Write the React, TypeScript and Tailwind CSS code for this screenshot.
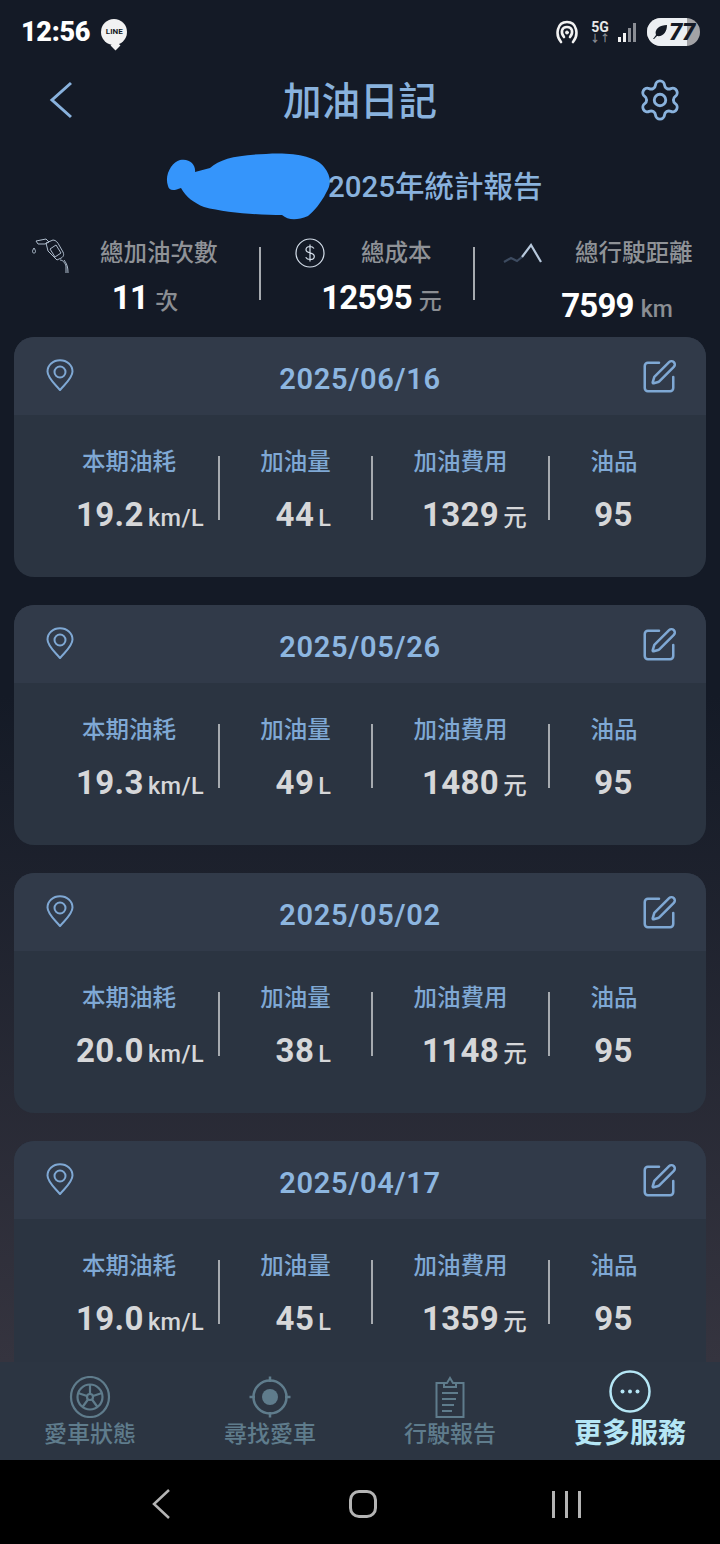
import React from 'react';
import { Settings, SquarePen } from 'lucide-react';

const fontStack = { fontFamily: 'Roboto, "Noto Sans CJK TC", sans-serif' };

const records = [
  { date: '2025/06/16', economy: '19.2', liters: '44', cost: '1329', grade: '95' },
  { date: '2025/05/26', economy: '19.3', liters: '49', cost: '1480', grade: '95' },
  { date: '2025/05/02', economy: '20.0', liters: '38', cost: '1148', grade: '95' },
  { date: '2025/04/17', economy: '19.0', liters: '45', cost: '1359', grade: '95' },
];

function PinIcon() {
  return (
    <svg width="28" height="32" viewBox="0 0 28 32" fill="none" stroke="#7fa8d4" strokeWidth="2">
      <path d="M14 31 C9 25 1.500 19 1.500 12.500 C1.500 6 7 1.200 14 1.200 C21 1.200 26.500 6 26.500 12.500 C26.500 19 19 25 14 31Z" />
      <circle cx="14" cy="13" r="5.500" />
    </svg>
  );
}

function FuelIcon() {
  return (
    <svg width="38" height="36" viewBox="0 0 38 36" fill="none" stroke="#aebccc" strokeWidth="1" strokeLinejoin="round">
      <path d="M5 3 L15 1 L18 4 L14 6 L7 6Z" />
      <path d="M3 10 C1 13 1 15 3 15 C5 15 5 13 3 10Z" />
      <path d="M15 5 L22 2 C25 2 27 5 28 7 L32 14 C34 18 31 20 28 21 L26 22 L17 13Z" />
      <path d="M19 11 L25 7 L30 15 L24 19Z" />
      <path d="M29 22 C32 22 34 25 35 28 L35 35 M33 22 C36 26 37 29 37 35" />
    </svg>
  );
}

function DollarIcon() {
  return (
    <svg width="30" height="30" viewBox="0 0 30 30" fill="none" stroke="#d5dfeb" strokeWidth="1.200">
      <circle cx="15" cy="15" r="14" />
      <path d="M19 10.500 C18 9 16.500 8.500 15 8.500 C12.500 8.500 11 9.800 11 11.700 C11 16 19.300 13.700 19.300 18.400 C19.300 20.300 17.500 21.500 15 21.500 C13 21.500 11.500 20.700 10.700 19.300 M15 6.500 L15 23.500" />
    </svg>
  );
}

function RouteIcon() {
  return (
    <svg width="40" height="24" viewBox="0 0 40 24" fill="none" strokeWidth="2.200">
      <path d="M1 20 L8 16 L14 19 L19 15" stroke="#3d4b60" />
      <path d="M19 15 L28 3 L38 20" stroke="#b7c8dc" />
    </svg>
  );
}

function WheelIcon() {
  return (
    <svg width="42" height="42" viewBox="0 0 42 42" fill="none" stroke="#5f7c8c" strokeWidth="2.200">
      <ellipse cx="21" cy="21" rx="19" ry="20" />
      <circle cx="21" cy="21" r="12.500" />
      <circle cx="21" cy="21" r="3" />
      <path d="M21 8.500 L21 18 M9 17 L18 20 M13.500 31 L19 23.500 M28.500 31 L23 23.500 M33 17 L24 20" />
    </svg>
  );
}

function TargetIcon() {
  return (
    <svg width="42" height="42" viewBox="0 0 42 42" fill="none" stroke="#5f7c8c" strokeWidth="2.500">
      <circle cx="21" cy="21" r="16.500" />
      <circle cx="21" cy="21" r="8" fill="#5f7c8c" stroke="none" />
      <path d="M21 0.500 L21 6 M21 36 L21 41.500 M0.500 21 L6 21 M36 21 L41.500 21" />
    </svg>
  );
}

function ReportIcon() {
  return (
    <svg width="30" height="42" viewBox="0 0 30 42" fill="none" stroke="#5f7c8c" strokeWidth="2">
      <path d="M9 7 L1.500 7 L1.500 41 L28.500 41 L28.500 7 L21 7" />
      <path d="M9 11 L9 7 L12 7 L15 2 L18 7 L21 7 L21 11Z" />
      <path d="M7 17 L23 17 M7 23 L21 23 M7 29 L19 29 M7 35 L17 35" />
    </svg>
  );
}

function MoreIcon() {
  return (
    <svg width="42" height="43" viewBox="0 0 42 43" fill="none">
      <ellipse cx="21" cy="21.500" rx="19.500" ry="20" stroke="#b5e6f5" strokeWidth="2.500" />
      <circle cx="13.500" cy="21.500" r="2" fill="#b5e6f5" />
      <circle cx="21" cy="21.500" r="2" fill="#b5e6f5" />
      <circle cx="28.500" cy="21.500" r="2" fill="#b5e6f5" />
    </svg>
  );
}

function StatusBar() {
  return (
    <div className="h-[64px] shrink-0 flex items-start justify-between pl-[21px] pr-[20px] pt-[18px]">
      <div className="flex items-center gap-[11px]">
        <span className="text-[27px] leading-[28px] font-black text-white tracking-[-0.3px]">12:56</span>
        <div className="relative w-[26px] h-[26px] rounded-full bg-[#f2f2f2] flex items-center justify-center">
          <span className="text-[8px] leading-none font-bold text-[#141a26]">LINE</span>
          <span className="absolute -bottom-[4px] left-[11px] w-[7px] h-[7px] bg-[#f2f2f2] rotate-45" />
        </div>
      </div>
      <div className="flex items-center h-[28px]">
        <svg width="22" height="24" viewBox="0 0 22 24" fill="none" stroke="#f2f2f2" strokeWidth="2.600" strokeLinecap="round">
          <path d="M5 22 C-1 15 1 2 11 2 C21 2 23 15 17 22" />
          <path d="M8 17 C4 12 6 7 11 7 C16 7 18 12 14 17" />
          <circle cx="11" cy="12.500" r="1.500" fill="#f2f2f2" strokeWidth="1" />
        </svg>
        <div className="ml-[13px] w-[18px] flex flex-col items-center">
          <span className="text-[14px] leading-[14px] font-bold text-[#e8e8e8]">5G</span>
          <span className="text-[10px] leading-[10px] font-bold text-[#8a8d94]">↓↑</span>
        </div>
        <svg className="ml-[9px]" width="20" height="20" viewBox="0 0 20 20">
          <rect x="0" y="15" width="3" height="5" fill="#f2f2f2" />
          <rect x="5" y="11" width="3" height="9" fill="#f2f2f2" />
          <rect x="10" y="6" width="3" height="14" fill="#8a8d94" />
          <rect x="15" y="1" width="3" height="19" fill="#8a8d94" />
        </svg>
        <div className="ml-[9px] w-[53px] h-[28px] rounded-full bg-[#a3a3a6] overflow-hidden">
          <div className="w-[40px] h-full bg-[#eceff3] flex items-center pl-[5px]">
            <svg width="16" height="16" viewBox="0 0 16 16" className="shrink-0">
              <path d="M1 15 L4 11 C2 5 8 1 15 1 C15 8 11 13 5 12 L2 15Z" fill="#141a26" />
            </svg>
            <span className="ml-[1px] text-[24px] leading-none font-black italic text-[#141a26] whitespace-nowrap tracking-[-0.5px]">77</span>
          </div>
        </div>
      </div>
    </div>
  );
}

function Stat({ value, unit }: { value: string; unit: string }) {
  return (
    <div className="flex items-baseline justify-center whitespace-nowrap">
      <span className="text-[33px] leading-[40px] font-bold text-white tracking-[-0.8px]">{value}</span>
      <span className="ml-[7px] text-[23px] leading-[40px] font-medium text-[#8b8e93]">{unit}</span>
    </div>
  );
}

function Summary() {
  return (
    <div className="h-[105px] shrink-0 flex items-start text-[#8f9297]">
      <div className="w-[259px] flex items-start pl-[31px] pt-[7px]">
        <div className="-mt-[1px]"><FuelIcon /></div>
        <div className="ml-[31px] w-[118px]">
          <div className="text-[23.500px] leading-[28px] font-medium whitespace-nowrap">總加油次數</div>
          <div className="mt-[11px] -ml-[28px]"><Stat value="11" unit="次" /></div>
        </div>
      </div>
      <div className="mt-[15px] w-[2px] h-[53px] bg-[#a6aaaf]" />
      <div className="w-[212px] flex items-start pl-[34px] pt-[7px]">
        <div className="-mt-[1px]"><DollarIcon /></div>
        <div className="ml-[-2px] w-[118px]">
          <div className="pl-[38px] text-[23.500px] leading-[28px] font-medium whitespace-nowrap">總成本</div>
          <div className="mt-[11px] -ml-[1px]"><Stat value="12595" unit="元" /></div>
        </div>
      </div>
      <div className="mt-[15px] w-[2px] h-[53px] bg-[#a6aaaf]" />
      <div className="w-[245px] flex items-start pl-[28px] pt-[7px]">
        <div className="pt-[3px]"><RouteIcon /></div>
        <div className="ml-[19px] w-[118px]">
          <div className="pl-[13px] text-[23.500px] leading-[28px] font-medium whitespace-nowrap">總行駛距離</div>
          <div className="mt-[19px] -ml-[8px]"><Stat value="7599" unit="km" /></div>
        </div>
      </div>
    </div>
  );
}

function Metric({ label, value, unit, width, shift, labelShift }: { label: string; value: string; unit?: string; width: string; shift: string; labelShift?: string }) {
  return (
    <div className={`${width} flex flex-col items-center shrink-0`}>
      <div className={`${labelShift ?? ''} text-[23.500px] leading-[30px] font-medium text-[#7fa8d4] whitespace-nowrap`}>{label}</div>
      <div className={`${shift} mt-[18px] flex items-baseline whitespace-nowrap text-[#d6d7d9]`}>
        <span className="text-[33px] leading-[40px] font-bold tracking-[0.4px]">{value}</span>
        {unit && <span className="ml-[4px] text-[23.500px] leading-[40px] font-medium tracking-[0.4px]">{unit}</span>}
      </div>
    </div>
  );
}

function Divider() {
  return <div className="mt-[9px] w-[2px] h-[64px] shrink-0 bg-[#a6aaaf]" />;
}

function RecordCard({ date, economy, liters, cost, grade }: (typeof records)[number]) {
  return (
    <div className="h-[240px] shrink-0 rounded-[20px] overflow-hidden bg-[#2b3441]">
      <div className="h-[78px] bg-[#313a49] grid grid-cols-[1fr_auto_1fr] items-start px-[30px]">
        <div className="pt-[22px] pl-[2px]"><PinIcon /></div>
        <div className="pt-[24px] text-[29px] leading-[36px] font-semibold tracking-[0.7px] text-[#8db6e0]">{date}</div>
        <div className="pt-[21px] -mr-[2px] flex justify-end text-[#7fa8d4]">
          <SquarePen size={38} strokeWidth={1.600} />
        </div>
      </div>
      <div className="flex items-start pt-[32px] pl-[30px]">
        <Metric label="本期油耗" value={economy} unit="km/L" width="w-[174px]" shift="ml-[18px]" labelShift="-ml-[4px]" />
        <Divider />
        <Metric label="加油量" value={liters} unit="L" width="w-[151px]" shift="ml-[16px]" />
        <Divider />
        <Metric label="加油費用" value={cost} unit="元" width="w-[175px]" shift="ml-[28px]" />
        <Divider />
        <Metric label="油品" value={grade} width="w-[128px]" shift="ml-[-1px]" />
      </div>
    </div>
  );
}

function NavItem({ icon, label, active }: { icon: React.ReactNode; label: string; active?: boolean }) {
  return (
    <div className="flex flex-col items-center">
      <div className={active ? 'h-[50px] flex items-end pb-[5px]' : 'h-[50px] flex items-end'}>{icon}</div>
      <div
        className={
          active
            ? '-mt-[1px] text-[28px] leading-[34px] font-bold text-[#b5e6f5] whitespace-nowrap'
            : 'text-[23px] leading-[34px] font-medium text-[#5f7c8c] whitespace-nowrap'
        }
      >
        {label}
      </div>
    </div>
  );
}

export default function App() {
  return (
    <div className="w-[720px] h-[1544px] flex flex-col overflow-hidden bg-[#141a26]" style={fontStack}>
      <StatusBar />

      {/* Header */}
      <div className="h-[76px] shrink-0 grid grid-cols-[1fr_auto_1fr] items-center px-[40px] text-[#89b2dd]">
        <svg width="24" height="38" viewBox="0 0 24 38" fill="none" stroke="currentColor" strokeWidth="3" className="-mt-[4px] ml-[9px]">
          <path d="M22 2 L3 19 L22 36" />
        </svg>
        <div className="text-[38.500px] leading-[48px] font-medium">加油日記</div>
        <div className="flex justify-end -mt-[4px] -mr-[3px]"><Settings size={46} strokeWidth={1.500} /></div>
      </div>

      {/* Report title, name covered by a scribble */}
      <div className="h-[92px] shrink-0 flex items-center pl-[166px]">
        <svg width="165" height="68" viewBox="0 0 165 68" className="shrink-0 mt-[2px]">
          <path
            d="M2 33 C-2 22 6 9 14 7 C24 5 30 12 29 19 L44 15 C54 6 70 2 100 1 C125 -1 150 3 158 14 C166 24 165 32 160 40 C155 50 148 58 142 63 C130 68 122 67 116 62 C95 62 60 60 38 54 C28 50 20 44 15 35 C8 38 3 38 2 33Z"
            fill="#3595fb"
          />
        </svg>
        <span className="-ml-[3px] mt-[1px] text-[29.500px] leading-[36px] font-medium text-[#89b2dd] whitespace-nowrap">2025年統計報告</span>
      </div>

      <Summary />

      {/* Records, the last one runs under the tab bar */}
      <div className="flex-1 min-h-0 overflow-hidden flex flex-col gap-[28px] px-[14px] bg-[linear-gradient(to_bottom,#141a26_0%,#141a26_35%,#35343f_100%)]">
        {records.map((r) => (
          <RecordCard key={r.date} {...r} />
        ))}
      </div>

      {/* Tab bar */}
      <div className="h-[98px] shrink-0 bg-[#2c3542] grid grid-cols-4 pt-[6px]">
        <NavItem icon={<WheelIcon />} label="愛車狀態" />
        <NavItem icon={<TargetIcon />} label="尋找愛車" />
        <NavItem icon={<ReportIcon />} label="行駛報告" />
        <NavItem icon={<MoreIcon />} label="更多服務" active />
      </div>

      {/* System navigation */}
      <div className="h-[84px] shrink-0 bg-black flex items-center pt-[4px]">
        <div className="w-[724px] flex items-center">
          <svg className="ml-[150px]" width="22" height="30" viewBox="0 0 22 30" fill="none" stroke="#b4b4b4" strokeWidth="2.500">
            <path d="M19 1 L4 15 L19 29" />
          </svg>
          <div className="ml-[177px] w-[28px] h-[28px] rounded-[10px] border-[3px] border-[#b4b4b4]" />
          <div className="ml-[175px] flex gap-[10px]">
            <div className="w-[3px] h-[27px] bg-[#b4b4b4]" />
            <div className="w-[3px] h-[27px] bg-[#b4b4b4]" />
            <div className="w-[3px] h-[27px] bg-[#b4b4b4]" />
          </div>
        </div>
      </div>
    </div>
  );
}
